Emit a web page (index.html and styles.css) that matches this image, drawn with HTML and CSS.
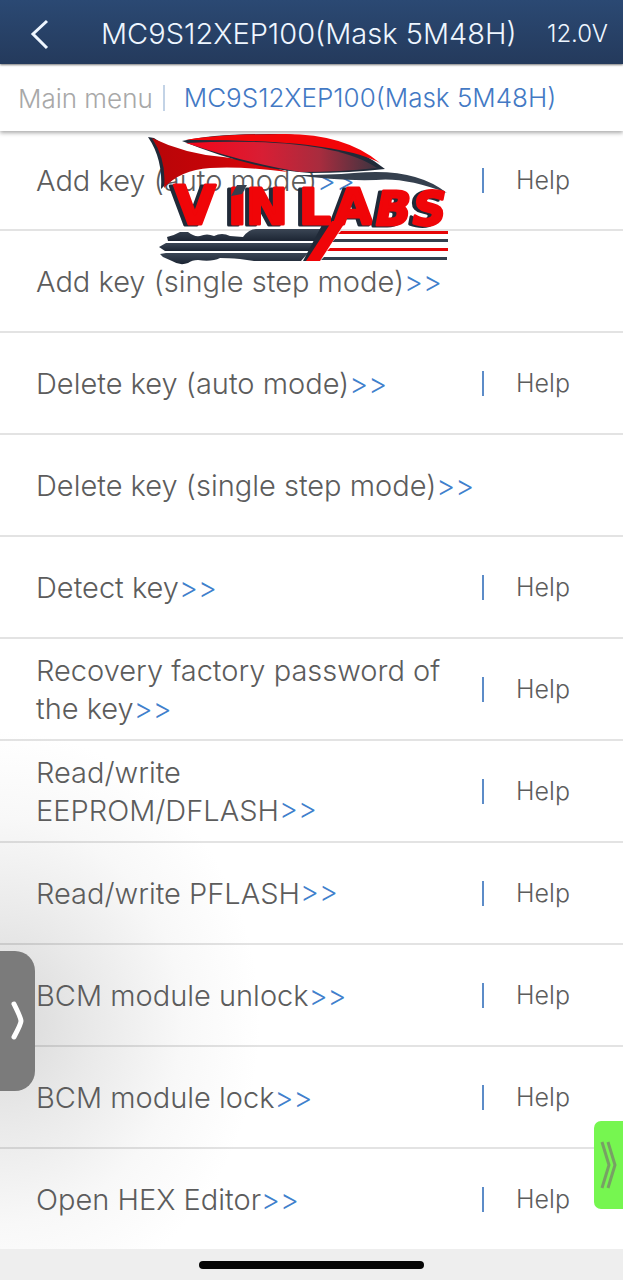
FILE: index.html
```html
<!DOCTYPE html>
<html lang="en">
<head>
<meta charset="utf-8">
<meta name="viewport" content="width=device-width, initial-scale=1">
<title>MC9S12XEP100(Mask 5M48H)</title>
<link rel="stylesheet" href="styles.css">
</head>
<body>
<div class="app">
  <header class="topbar">
    <button class="back" aria-label="Back"><svg width="20" height="32" viewBox="0 0 20 32"><path d="M18 3 4 16 18 30" fill="none" stroke="#eef6ff" stroke-width="3"/></svg></button>
    <h1 class="title">MC9S12XEP100(Mask 5M48H)</h1>
    <span class="voltage">12.0V</span>
  </header>
  <nav class="crumbs">
    <a class="crumb" href="#main">Main menu</a>
    <a class="crumb current" href="#chip">MC9S12XEP100(Mask 5M48H)</a>
  </nav>
  <main class="content">
    <ul class="list">
      <li class="row"><a class="name" href="#1">Add key (auto mode)<span class="more">&gt;&gt;</span></a><button class="help">Help</button></li>
      <li class="row"><a class="name" href="#2">Add key (single step mode)<span class="more">&gt;&gt;</span></a></li>
      <li class="row"><a class="name" href="#3">Delete key (auto mode)<span class="more">&gt;&gt;</span></a><button class="help">Help</button></li>
      <li class="row"><a class="name" href="#4">Delete key (single step mode)<span class="more">&gt;&gt;</span></a></li>
      <li class="row"><a class="name" href="#5">Detect key<span class="more">&gt;&gt;</span></a><button class="help">Help</button></li>
      <li class="row"><a class="name" href="#6">Recovery factory password of the key<span class="more">&gt;&gt;</span></a><button class="help">Help</button></li>
      <li class="row"><a class="name" href="#7">Read/write EEPROM/DFLASH<span class="more">&gt;&gt;</span></a><button class="help">Help</button></li>
      <li class="row"><a class="name" href="#8">Read/write PFLASH<span class="more">&gt;&gt;</span></a><button class="help">Help</button></li>
      <li class="row"><a class="name" href="#9">BCM module unlock<span class="more">&gt;&gt;</span></a><button class="help">Help</button></li>
      <li class="row"><a class="name" href="#10">BCM module lock<span class="more">&gt;&gt;</span></a><button class="help">Help</button></li>
      <li class="row"><a class="name" href="#11">Open HEX Editor<span class="more">&gt;&gt;</span></a><button class="help">Help</button></li>
    </ul>
    <svg class="logo" width="306" height="136" viewBox="146 130 306 136" aria-label="VINLABS">
      <defs>
        <linearGradient id="fin" x1="0" y1="0" x2="1" y2="0"><stop offset="0" stop-color="#b80508"/><stop offset=".4" stop-color="#c40408"/><stop offset="1" stop-color="#e00508"/></linearGradient>
        <linearGradient id="glass" x1="0" y1="0" x2="1" y2="0"><stop offset="0" stop-color="#f40418"/><stop offset=".4" stop-color="#d81e34"/><stop offset=".7" stop-color="#a82c3e"/><stop offset="1" stop-color="#3b3440"/></linearGradient>
        <linearGradient id="steel" x1="0" y1="0" x2="0" y2="1"><stop offset="0" stop-color="#3b4655"/><stop offset="1" stop-color="#1c2533"/></linearGradient>
      </defs>
      <path fill="#202a38" d="M148 136 154 137 170 148 171 178 161 188Q163 158 148 136Z"/>
      <path fill="url(#fin)" d="M152 137Q185 153 223 156Q252 159 288 171Q242 165 210 167Q180 169 164 187Q167 160 152 137Z"/>
      <path fill="#202a38" d="M182 140Q215 133 270 133Q340 132 385 168Q350 172 310 172Q250 168 182 140Z"/>
      <path fill="#f30508" d="M186 139Q220 133 285 133Q346 133 380 162Q335 138 186 139Z"/>
      <path fill="url(#glass)" d="M186 142Q330 135 377 167Q340 171 300 171Q250 163 186 142Z"/>
      <path fill="#35404e" d="M296 174Q330 174 354 172Q415 166 447 192Q405 176 376 179Q335 180 296 174Z"/>
      <path fill="url(#steel)" d="M168 240 167 236Q175 234 180 231H188Q194 236 200 235Q207 232 214 235Q222 231 230 235L243 236Q249 228 256 228H321L315 240Z"/>
      <path fill="url(#steel)" d="M159 246 166 242H314L309 250H165Z"/>
      <path fill="url(#steel)" d="M160 253 166 252H308L301 260H254L240 258Q228 257 220 257Q212 261 198 259Q192 259 188 262Q180 265 172 260L163 256Z"/>
      <path fill="#202a38" d="M323 222H336L315 260H303Z"/>
      <path fill="#e60508" d="M341 230H448V233H338ZM330 247H448V250H327Z"/>
      <path fill="#343f4d" d="M335 238H448V241H332ZM324 256H447V259H321Z"/>
      <text class="wordmark" x="174 228 246 299 334" y="223"><tspan class="tall">V</tspan>INLA</text>
      <text class="wordmark slanted" x="376 413" y="224">BS</text>
      <path fill="#f00508" d="M332 220H346L320 260H306Z"/>
      <path fill="#35404e" d="M231 195 237 184H247L242 193Z"/>
    </svg>
    <button class="drawer" aria-label="Open drawer"><svg width="18" height="42" viewBox="0 0 18 42"><path d="M5 4Q12 18 12 21Q12 24 5 37" fill="none" stroke="#fff" stroke-width="5" stroke-linecap="round" stroke-linejoin="round"/></svg></button>
    <button class="tab" aria-label="Expand"><svg width="18" height="52" viewBox="0 0 18 52"><path d="M2 3 9 26 2 49M8 3 15 26 8 49" fill="none" stroke="#78a065" stroke-width="3"/></svg></button>
  </main>
  <footer class="dock"><div class="pill"></div></footer>
</div>
</body>
</html>
```
FILE: styles.css
```css
* { box-sizing: border-box; }
body { margin: 0; background: #fff; color: #5c5c5c; font-family: Inter, "Liberation Sans", sans-serif; font-weight: 300; }
button { border: 0; padding: 0; background: none; color: inherit; font: inherit; cursor: pointer; }
a { color: inherit; text-decoration: none; }
svg { display: block; }
.app { display: flex; flex-direction: column; min-height: 100vh; }
.topbar { display: flex; align-items: center; height: 64px; padding: 3px 15px 0 29px; background: linear-gradient(#2b4973, #243a5c); color: #eef6ff; box-shadow: 0 1px 2px #777; position: relative; z-index: 2; }
.title { flex: 1; margin: 0; padding-left: 52px; font-size: 29px; font-weight: 300; white-space: nowrap; }
.voltage { font-size: 24px; }
.crumbs { display: flex; align-items: center; height: 67px; padding: 1px 18px 0; font-size: 26px; background: #fff; box-shadow: 0 2px 4px #aaa; position: relative; z-index: 1; white-space: nowrap; }
.crumb { color: #a8a8a8; }
.current { margin-left: 10px; padding-left: 19px; border-left: 2px solid #c3d3e6; color: #4379c4; line-height: 26px; }
.content { flex: 1; position: relative; background: radial-gradient(ellipse 260px 290px at 0 890px, #d8d8d8, #e9e9e9 35%, #f8f8f8 70%, #fff); }
.list { margin: 0; padding: 0; list-style: none; }
.row { display: flex; align-items: center; height: 102px; padding: 1px 53px 0 36px; border-bottom: 2px solid rgba(0, 0, 0, .11); }
.row:first-child { height: 100px; }
.row:last-child { height: 100px; border: 0; }
.name { flex: 1; font-size: 29px; line-height: 38px; }
.more { color: #4080cc; }
.help { width: 88px; margin-left: 20px; border-left: 2px solid #5c8cc8; font-size: 25px; line-height: 25px; text-align: right; }
.logo { position: absolute; left: 146px; top: 0; z-index: 3; }
.wordmark { font: bold 50px "DejaVu Sans", sans-serif; fill: #f00508; stroke: #f00508; stroke-width: 3px; stroke-linejoin: round; filter: drop-shadow(-4px 1px 0 #202a38); }
.tall { font-size: 54px; }
.slanted { font-style: italic; font-size: 46px; }
.drawer { position: absolute; left: 0; top: 820px; width: 35px; height: 140px; padding-left: 9px; background: #7b7b7b; border-radius: 0 20px 20px 0; }
.tab { position: absolute; right: 0; top: 990px; width: 29px; height: 88px; padding-left: 6px; background: #76f650; border-radius: 7px 0 0 7px; }
.dock { display: flex; justify-content: center; align-items: center; height: 31px; background: #eee; }
.pill { width: 36%; height: 8px; border-radius: 4px; background: #050505; }
```
